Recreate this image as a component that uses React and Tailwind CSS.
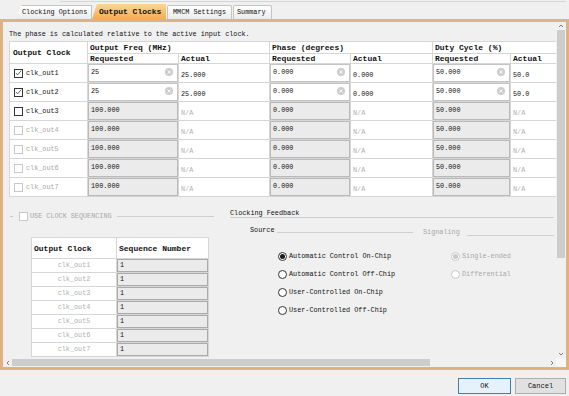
import React from "react";

const clocks = [
  { name: "clk_out1", on: true, enabled: true },
  { name: "clk_out2", on: true, enabled: true },
  { name: "clk_out3", on: false, enabled: true },
  { name: "clk_out4", on: false, enabled: false },
  { name: "clk_out5", on: false, enabled: false },
  { name: "clk_out6", on: false, enabled: false },
  { name: "clk_out7", on: false, enabled: false },
];

function Check({ on, disabled }) {
  return (
    <span
      className={`w-[9px] h-[9px] shrink-0 border bg-white flex items-center justify-center ${
        disabled ? "border-[#c8c8c8]" : "border-[#333]"
      }`}
    >
      {on && (
        <svg viewBox="0 0 9 9" className="w-[8px] h-[8px]">
          <path d="M1.2 4.6 L3.4 6.9 L7.8 1.6" fill="none" stroke="#222" strokeWidth="0.9" />
        </svg>
      )}
    </span>
  );
}

function Radio({ on, disabled }) {
  return (
    <span
      className={`w-[9px] h-[9px] shrink-0 rounded-full border bg-white flex items-center justify-center ${
        disabled ? "border-[#c8c8c8]" : "border-[#333]"
      }`}
    >
      {on && <span className={`w-[5px] h-[5px] rounded-full ${disabled ? "bg-[#c8c8c8]" : "bg-[#1a1a1a]"}`} />}
    </span>
  );
}

function ClearIcon() {
  return (
    <svg viewBox="0 0 8 8" className="w-[8px] h-[8px] shrink-0">
      <circle cx="4" cy="4" r="4" fill="#cdcdcd" />
      <path d="M2.5 2.5 L5.5 5.5 M5.5 2.5 L2.5 5.5" stroke="#fff" strokeWidth="0.9" />
    </svg>
  );
}

// input box filling a cell; white + clear button when the clock is on
function Field({ value, active }) {
  return (
    <div
      className={`h-[18px] flex items-center justify-between pl-[2px] pr-[4px] pb-[2px] border ${
        active ? "bg-white border-[#c4c4c4]" : "bg-[#ebebeb] border-[#b9b9b9]"
      }`}
    >
      <span>{value}</span>
      {active && <ClearIcon />}
    </div>
  );
}

function Actual({ value, active }) {
  return (
    <div className={`h-[18px] flex items-center pl-[2px] pt-[4px] ${active ? "text-[#111]" : "text-[#b0b0b0]"}`}>
      {active ? value : "N/A"}
    </div>
  );
}

function Tabs() {
  return (
    <div className="h-[19px] flex flex-col">
      <div className="h-[2px] ml-[60px] mr-[3px] border-b border-[#d6d6d6]" />
      <div className="h-[17px] flex items-end pl-[14px]">
        <div className="w-[78px] h-[14px] pl-[8px] flex items-center bg-gradient-to-b from-white to-[#ececec] border-t border-r border-[#c4c4c4] [clip-path:polygon(8px_0,100%_0,100%_100%,0_100%)]">
          Clocking Options
        </div>
        <div className="w-[74px] h-[15px] pl-[7px] flex items-center font-bold text-[8px] bg-gradient-to-b from-[#fbd596] to-[#f4ad4e] [clip-path:polygon(5px_0,100%_0,100%_100%,0_100%)]">
          Output Clocks
        </div>
        <div className="w-[65px] h-[14px] ml-[1px] pl-[5px] flex items-center bg-gradient-to-b from-white to-[#ececec] border border-b-0 border-[#c4c4c4] rounded-t-[2px]">
          MMCM Settings
        </div>
        <div className="w-[39px] h-[14px] ml-[1px] pl-[3px] flex items-center bg-gradient-to-b from-white to-[#ececec] border border-b-0 border-[#c4c4c4] rounded-t-[2px]">
          Summary
        </div>
      </div>
    </div>
  );
}

function ClockTable() {
  const head = "border border-[#d6d6d6] bg-white font-bold text-[8px] text-left align-middle pl-[2px]";
  const cell = "border border-[#d6d6d6] bg-white p-0 align-top";
  return (
    <table className="mt-[2px] w-[592px] table-fixed border-collapse">
      <colgroup>
        <col className="w-[78px]" />
        <col className="w-[91px]" />
        <col className="w-[91px]" />
        <col className="w-[81px]" />
        <col className="w-[82px]" />
        <col className="w-[78px]" />
        <col className="w-[91px]" />
      </colgroup>
      <thead>
        <tr className="h-[12px]">
          <th rowSpan={2} className={head + " pl-[3px]"}>Output Clock</th>
          <th colSpan={2} className={head}>Output Freq (MHz)</th>
          <th colSpan={2} className={head}>Phase (degrees)</th>
          <th colSpan={2} className={head}>Duty Cycle (%)</th>
        </tr>
        <tr className="h-[10px] leading-[9px]">
          <th className={head}>Requested</th>
          <th className={head}>Actual</th>
          <th className={head}>Requested</th>
          <th className={head}>Actual</th>
          <th className={head}>Requested</th>
          <th className={head}>Actual</th>
        </tr>
      </thead>
      <tbody>
        {clocks.map((c) => (
          <tr key={c.name} className="h-[19px]">
            <td className={cell}>
              <div className="h-[18px] flex items-center gap-[3px] pl-[4px]">
                <Check on={c.on} disabled={!c.enabled} />
                <span className={c.enabled ? "text-[#111]" : "text-[#a8a8a8]"}>{c.name}</span>
              </div>
            </td>
            <td className={cell}><Field value={c.on ? "25" : "100.000"} active={c.on} /></td>
            <td className={cell}><Actual value="25.000" active={c.on} /></td>
            <td className={cell}><Field value="0.000" active={c.on} /></td>
            <td className={cell}><Actual value="0.000" active={c.on} /></td>
            <td className={cell}><Field value="50.000" active={c.on} /></td>
            <td className={cell}><Actual value="50.0" active={c.on} /></td>
          </tr>
        ))}
      </tbody>
    </table>
  );
}

function Sequencing() {
  return (
    <div className="w-[221px] shrink-0 flex flex-col">
      <div className="mt-[14px] h-[10px] w-[205px] flex items-center">
        <span className="ml-[1px] w-[3px] h-px bg-[#c8c8c8]" />
        <span className="ml-[6px]"><Check disabled /></span>
        <span className="ml-[2px] text-[#a8a8a8]">USE CLOCK SEQUENCING</span>
        <span className="ml-[5px] flex-1 h-px bg-[#cfcfcf]" />
      </div>
      <table className="mt-[16px] ml-[22px] w-[177px] table-fixed border-collapse">
        <colgroup>
          <col className="w-[85px]" />
          <col className="w-[92px]" />
        </colgroup>
        <thead>
          <tr className="h-[21px]">
            <th className="border border-[#d6d6d6] bg-white font-bold text-[8px] text-left pl-[2px]">Output Clock</th>
            <th className="border border-[#d6d6d6] bg-white font-bold text-[8px] text-left pl-[2px]">Sequence Number</th>
          </tr>
        </thead>
        <tbody>
          {clocks.map((c) => (
            <tr key={c.name} className="h-[14px]">
              <td className="border border-[#d6d6d6] bg-white text-center text-[#b0b0b0] p-0">{c.name}</td>
              <td className="border border-[#d6d6d6] p-0">
                <div className="h-[13px] bg-[#ebebeb] border border-[#aaaaaa] pl-[2px] flex items-center">1</div>
              </td>
            </tr>
          ))}
        </tbody>
      </table>
    </div>
  );
}

function Feedback() {
  const source = [
    "Automatic Control On-Chip",
    "Automatic Control Off-Chip",
    "User-Controlled On-Chip",
    "User-Controlled Off-Chip",
  ];
  return (
    <div className="w-[324px] shrink-0 flex flex-col">
      <div className="mt-[12px] h-[9px] leading-[8px] border-b border-[#cfcfcf]">Clocking Feedback</div>
      <div className="flex mt-[8px]">
        <div className="w-[183px] flex flex-col">
          <div className="flex items-end pl-[20px]">
            <span>Source</span>
            <span className="ml-[3px] mb-[2px] flex-1 h-px bg-[#cfcfcf]" />
          </div>
          <div className="mt-[12px] flex flex-col">
            {source.map((s, i) => (
              <div key={s} className="h-[18px] pl-[48px] flex items-center gap-[2px]">
                <Radio on={i === 0} />
                <span>{s}</span>
              </div>
            ))}
          </div>
        </div>
        <div className="ml-[10px] w-[131px] flex flex-col">
          <div className="flex items-end pt-[2px]">
            <span className="text-[#a8a8a8]">Signaling</span>
            <span className="ml-[7px] mb-[1px] flex-1 h-px bg-[#cfcfcf]" />
          </div>
          <div className="mt-[10px] flex flex-col text-[#a8a8a8]">
            <div className="h-[18px] pl-[28px] flex items-center gap-[2px]">
              <Radio on disabled />
              <span>Single-ended</span>
            </div>
            <div className="h-[18px] pl-[28px] flex items-center gap-[2px]">
              <Radio disabled />
              <span>Differential</span>
            </div>
          </div>
        </div>
      </div>
    </div>
  );
}

function Chevron({ dir }) {
  const d = {
    up: "M1 4 L3 2 L5 4",
    down: "M1 2 L3 4 L5 2",
    left: "M4 1 L2 3 L4 5",
    right: "M2 1 L4 3 L2 5",
  }[dir];
  return (
    <svg viewBox="0 0 6 6" className="w-[6px] h-[6px]">
      <path d={d} fill="none" stroke="#707070" strokeWidth="0.9" />
    </svg>
  );
}

export default function App() {
  return (
    <div className="w-[569px] h-[396px] overflow-hidden bg-[#f0f0f0] flex flex-col font-['Liberation_Mono',monospace] text-[6.8px] leading-[9px] text-[#111]">
      <Tabs />

      {/* orange framed page */}
      <div className="h-[351px] shrink-0 border-[3px] border-[#e0b282] flex flex-col">
        <div className="h-[336px] flex">
          <div className="w-[553px] overflow-hidden pl-[6px] pt-[8px]">
            <p className="h-[9px] whitespace-nowrap">The phase is calculated relative to the active input clock.</p>
            <ClockTable />
            <div className="flex">
              <Sequencing />
              <Feedback />
            </div>
          </div>

          <div className="w-[10px] flex flex-col bg-[#f0f0f0]">
            <div className="h-[8px] flex items-center justify-center"><Chevron dir="up" /></div>
            <div className="mx-[1px] h-[228px] bg-[#cdcdcd]" />
            <div className="flex-1" />
            <div className="h-[9px] flex items-center justify-center"><Chevron dir="down" /></div>
          </div>
        </div>

        <div className="h-[9px] flex items-center bg-[#f0f0f0]">
          <div className="w-[9px] flex justify-center"><Chevron dir="left" /></div>
          <div className="w-[418px] h-[7px] bg-[#cdcdcd]" />
          <div className="flex-1" />
          <div className="w-[9px] flex justify-center"><Chevron dir="right" /></div>
          <div className="w-[10px] h-full bg-[#f7f7f7]" />
        </div>
      </div>

      <div className="flex-1 flex justify-end items-start pt-[8px] pr-[3px] gap-[4px]">
        <button className="w-[53px] h-[16px] border border-[#3c7fb1] bg-[#e5f1fb] text-[7px] leading-none">OK</button>
        <button className="w-[51px] h-[16px] border border-[#adadad] bg-[#e1e1e1] text-[7px] leading-none">Cancel</button>
      </div>
    </div>
  );
}
